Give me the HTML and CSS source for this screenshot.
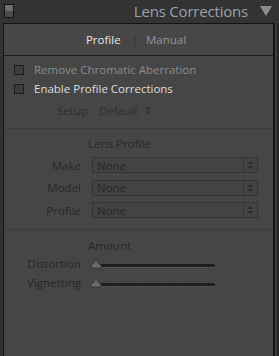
FILE: index.html
```html
<!DOCTYPE html>
<html>
<head>
<meta charset="utf-8">
<link rel="stylesheet" href="styles.css">
</head>
<body>
<div class="frame">
  <div class="header">
    <span class="solo"></span>
    <span class="title">Lens Corrections</span>
    <svg class="tri" width="12" height="10" viewBox="0 0 12 10"><path d="M0 0 H12 L6 10 Z" fill="#8a8e92"/></svg>
  </div>
  <div class="panel">
    <div class="tabs">
      <span class="tab on">Profile</span>
      <span class="sep">|</span>
      <span class="tab">Manual</span>
    </div>
    <div class="sec1">
      <div class="check dim"><span class="box"></span>Remove Chromatic Aberration</div>
      <div class="check"><span class="box"></span>Enable Profile Corrections</div>
      <div class="setup"><span class="lbl">Setup</span><span class="val">Default</span><span class="updn">&#8661;</span></div>
    </div>
    <div class="sec2">
      <div class="sechead">Lens Profile</div>
      <div class="row"><span class="rl">Make</span><span class="sel"><span class="st">None</span><span class="sa"><svg width="7" height="10" viewBox="0 0 7 10"><path d="M0.5 4 L3.5 1 L6.5 4 Z M0.5 6 L3.5 9 L6.5 6 Z" fill="#2c2c2c"/></svg></span></span></div>
      <div class="row"><span class="rl">Model</span><span class="sel"><span class="st">None</span><span class="sa"><svg width="7" height="10" viewBox="0 0 7 10"><path d="M0.5 4 L3.5 1 L6.5 4 Z M0.5 6 L3.5 9 L6.5 6 Z" fill="#2c2c2c"/></svg></span></span></div>
      <div class="row"><span class="rl">Profile</span><span class="sel"><span class="st">None</span><span class="sa"><svg width="7" height="10" viewBox="0 0 7 10"><path d="M0.5 4 L3.5 1 L6.5 4 Z M0.5 6 L3.5 9 L6.5 6 Z" fill="#2c2c2c"/></svg></span></span></div>
    </div>
    <div class="sec3">
      <div class="sechead">Amount</div>
      <div class="srow"><span class="rl">Distortion</span>
        <span class="slider">
          <svg width="128" height="14" viewBox="0 0 128 14">
            <g stroke="#3b3b3b" stroke-width="1">
              <line x1="17.5" y1="2" x2="17.5" y2="5"/><line x1="30.5" y1="2" x2="30.5" y2="5"/><line x1="43.5" y1="2" x2="43.5" y2="5"/><line x1="56.5" y1="2" x2="56.5" y2="5"/><line x1="69.5" y1="2" x2="69.5" y2="5"/><line x1="82.5" y1="2" x2="82.5" y2="5"/><line x1="95.5" y1="2" x2="95.5" y2="5"/><line x1="108.5" y1="2" x2="108.5" y2="5"/>
            </g>
            <rect x="1" y="7" width="124" height="3" rx="1.5" fill="#1e1e1e"/>
            <rect x="2" y="10" width="122" height="1" fill="#555"/>
            <path d="M6 3 L9 7 L11 8 L11 11 L1 11 L1 8 L3 7 Z" fill="#6a6a6a" stroke="#333" stroke-width="0.8"/>
          </svg>
        </span>
      </div>
      <div class="srow"><span class="rl">Vignetting</span>
        <span class="slider">
          <svg width="128" height="14" viewBox="0 0 128 14">
            <g stroke="#3b3b3b" stroke-width="1">
              <line x1="17.5" y1="2" x2="17.5" y2="5"/><line x1="30.5" y1="2" x2="30.5" y2="5"/><line x1="43.5" y1="2" x2="43.5" y2="5"/><line x1="56.5" y1="2" x2="56.5" y2="5"/><line x1="69.5" y1="2" x2="69.5" y2="5"/><line x1="82.5" y1="2" x2="82.5" y2="5"/><line x1="95.5" y1="2" x2="95.5" y2="5"/><line x1="108.5" y1="2" x2="108.5" y2="5"/>
            </g>
            <rect x="1" y="7" width="124" height="3" rx="1.5" fill="#1e1e1e"/>
            <rect x="2" y="10" width="122" height="1" fill="#555"/>
            <path d="M6 3 L9 7 L11 8 L11 11 L1 11 L1 8 L3 7 Z" fill="#6a6a6a" stroke="#333" stroke-width="0.8"/>
          </svg>
        </span>
      </div>
    </div>
  </div>
</div>
</body>
</html>
```

FILE: styles.css
```css
html, body {
  margin: 0;
  padding: 0;
  background: #333333;
  width: 279px;
  height: 356px;
  overflow: hidden;
  font-family: "Open Sans", "Noto Sans", sans-serif;
}
.frame {
  display: flex;
  flex-direction: column;
  height: 356px;
}
.header {
  height: 23px;
  display: flex;
  align-items: center;
  padding: 0 7px 0 4px;
}
.solo {
  width: 8px;
  height: 12px;
  border: 1px solid #111;
  background: linear-gradient(#6e6e6e 0 45%, #4a4a4a 55% 100%);
  margin-top: -2px;
}
.title {
  margin-left: auto;
  font-size: 15px;
  color: #9aa2aa;
  margin-right: 12px;
  letter-spacing: -0.2px;
  margin-top: -2px;
}
.tri { margin-top: -2px; }
.panel {
  margin-left: 3px;
  width: 269px;
  flex: 1;
  background: #464646;
  border: 1px solid #141414;
  border-bottom: none;
  border-right: 2px solid #141414;
  box-shadow: 2px 0 0 #3c3c3c, 4px 0 0 #262626;
}
.tabs {
  height: 31px;
  border-bottom: 1px solid #1e1e1e;
  background: #474747;
  display: flex;
  align-items: center;
  justify-content: center;
  font-size: 11.5px;
  gap: 8px;
  padding-right: 5px;
}
.tab { color: #8f9398; }
.tab.on { color: #e6e6e6; }
.sep { color: #333; margin-left: 3px; }
.sec1 {
  padding: 4px 0 0 10px;
  height: 68px;
  border-bottom: 1px solid #3c3c3c;
  font-size: 11.5px;
}
.check {
  display: flex;
  align-items: center;
  height: 19px;
  color: #dedede;
}
.check.dim { color: #8c8c8c; }
.box {
  width: 8px;
  height: 8px;
  border: 1px solid #1c1c1c;
  background: #3d3d3d;
  margin-right: 10px;
}
.setup {
  margin-top: 3px;
  padding-left: 43px;
  display: flex;
  align-items: center;
  color: #2f2f2f;
  height: 18px;
}
.setup .val { margin-left: 11px; }
.setup .updn { margin-left: 6px; font-size: 10px; }
.sec2 {
  height: 94px;
  border-bottom: 1px solid #3c3c3c;
  padding-top: 6px;
}
.sechead {
  font-size: 11.5px;
  color: #272727;
  padding-left: 84px;
  height: 17px;
  line-height: 17px;
}
.sec2 .sechead { margin-bottom: 2px; }
.row {
  display: flex;
  align-items: center;
  height: 22.5px;
  font-size: 11.5px;
  color: #272727;
}
.rl {
  width: 77px;
  text-align: right;
  margin-right: 11px;
}
.sel {
  width: 164px;
  height: 14px;
  border: 1px solid #343434;
  background: #434343;
  display: flex;
  align-items: center;
}
.st { flex: 1; padding-left: 4px; color: #262626; }
.sa {
  width: 13px;
  height: 14px;
  border-left: 1px solid #343434;
  display: flex;
  align-items: center;
  justify-content: center;
}
.sec3 { padding-top: 7px; }
.srow {
  display: flex;
  align-items: center;
  height: 19px;
  font-size: 11.5px;
  color: #272727;
}
.slider { display: flex; margin-left: -2px; }
```
